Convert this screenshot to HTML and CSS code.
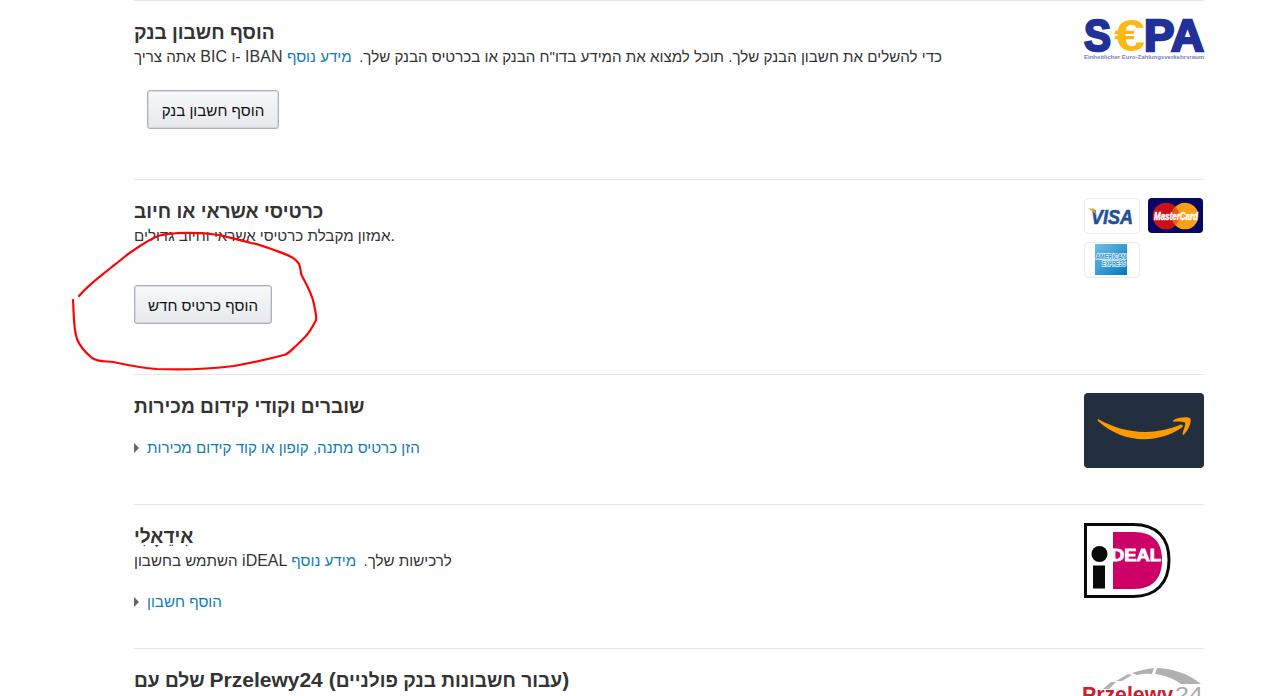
FILE: index.html
```html
<!DOCTYPE html>
<html lang="he">
<head>
    <meta charset="UTF-8">
    <meta name="viewport" content="width=device-width, initial-scale=1.0">
    <title>אמצעי תשלום</title>
    <link rel="stylesheet" href="styles.css">
</head>
<body>
    <div class="payments">
        <section class="method bank">
            <div class="info">
                <h2><bdi>הוסף חשבון בנק</bdi></h2>
                <p><bdi>אתה צריך</bdi> BIC <bdi>ו</bdi>- IBAN <a href="#"><bdi>מידע נוסף</bdi></a> <bdi class="after-link" dir="rtl">כדי להשלים את חשבון הבנק שלך. תוכל למצוא את המידע בדו"ח הבנק או בכרטיס הבנק שלך.</bdi></p>
                <button class="btn btn-bank"><bdi>הוסף חשבון בנק</bdi></button>
            </div>
            <svg class="logo" width="120" height="42" viewBox="0 0 120 42">
                <g font-family="Liberation Sans, sans-serif" font-weight="bold">
                    <g fill="#22309a" stroke="#22309a" stroke-width="2.4" font-size="44">
                        <text x="0" y="31.500" textLength="27" lengthAdjust="spacingAndGlyphs">S</text>
                        <text x="60" y="31.500" textLength="60" lengthAdjust="spacingAndGlyphs">PA</text>
                    </g>
                    <text x="30" y="32" font-size="45" textLength="31" lengthAdjust="spacingAndGlyphs" fill="#fdb913">€</text>
                    <text x="0" y="40" font-size="6" textLength="120" lengthAdjust="spacingAndGlyphs" fill="#7b80b8">Einheitlicher Euro-Zahlungsverkehrsraum</text>
                </g>
            </svg>
        </section>

        <section class="method card">
            <div class="info">
                <h2><bdi>כרטיסי אשראי או חיוב</bdi></h2>
                <p><bdi>אמזון מקבלת כרטיסי אשראי וחיוב גדולים</bdi>.</p>
                <button class="btn btn-card"><bdi>הוסף כרטיס חדש</bdi></button>
            </div>
            <svg class="logo" width="120" height="80" viewBox="0 0 120 80" font-family="Liberation Sans, sans-serif">
                <rect x=".5" y=".5" width="55" height="35" rx="4" fill="#fff" stroke="#ececec"/>
                <text x="7" y="26" font-size="21" font-weight="bold" font-style="italic" textLength="42" lengthAdjust="spacingAndGlyphs" fill="#1f5093" stroke="#1f5093" stroke-width=".6">VISA</text>
                <path d="M4 10.500h6l3 8c-2-4-5-6-9-8z" fill="#eea32f"/>
                <rect x="64" y="0" width="55" height="35" rx="4" fill="#060765"/>
                <circle cx="82" cy="18" r="13.3" fill="#cc1017"/>
                <circle cx="101" cy="18" r="13.3" fill="#fb9f16"/>
                <path d="M91.500 8.700a13.300 13.300 0 0 1 0 18.600a13.300 13.300 0 0 1 0-18.600z" fill="#e65c1b"/>
                <text x="70" y="22" font-size="10.500" font-weight="bold" font-style="italic" textLength="44" lengthAdjust="spacingAndGlyphs" fill="#fff" stroke="#fff" stroke-width=".5">MasterCard</text>
                <rect x=".5" y="44.500" width="55" height="35" rx="4" fill="#fff" stroke="#ececec"/>
                <linearGradient id="amex" x1="0" y1="0" x2="1" y2="1">
                    <stop offset="0" stop-color="#6fc0e8"/>
                    <stop offset="1" stop-color="#0577bd"/>
                </linearGradient>
                <rect x="11" y="46" width="32" height="31" fill="url(#amex)"/>
                <g font-weight="bold" font-size="6.500" fill="#3299cf" stroke="#e2f2fb" stroke-width="1.600" paint-order="stroke">
                    <text x="12" y="61" textLength="30" lengthAdjust="spacingAndGlyphs">AMERICAN</text>
                    <text x="18" y="68" textLength="24" lengthAdjust="spacingAndGlyphs">EXPRESS</text>
                </g>
            </svg>
            <!-- red pen mark around the button -->
            <svg class="pen" width="260" height="150" viewBox="65 225 260 150">
                <path d="M79 296C89 284 101 276 113 266C120 261 125 256 131 252C140 246 148 240 158 236C172 232 200 232 219 235C231 238 241 240 251 243C259 244 266 247 274 250C285 254 295 257 299 264C301 268 300 272 302 276C307 285 312 294 314 304C315 311 317 316 316 320C313 326 310 332 305 337L297 345C292 349 289 354 284 355C269 359 250 363 234 366C210 369 181 370 157 369C142 368 127 365 113 362C105 361 98 362 92 358C86 353 80 347 77 339C73 327 74 312 73 300"/>
            </svg>
        </section>

        <section class="method voucher">
            <div class="info">
                <h2><bdi>שוברים וקודי קידום מכירות</bdi></h2>
                <a class="expand" href="#"><bdi>הזן כרטיס מתנה, קופון או קוד קידום מכירות</bdi></a>
            </div>
            <svg class="logo" width="120" height="75" viewBox="0 0 120 75">
                <rect width="120" height="75" rx="4" fill="#232f3e"/>
                <path d="M14 26C40 41 70 43 97 31.500Q100 32 98 34.500C72 52 38 50 14 28Q13 26 14 26Z" fill="#ff9900"/>
                <path d="M89 27.500C94 24 104 23.500 106.500 25.500C108 30 103 39 99.500 42Q98 42 99 39C100 35 102 31 101 29.500C99 28.500 94 28.500 89 28.500Z" fill="#ff9900"/>
            </svg>
        </section>

        <section class="method ideal">
            <div class="info">
                <h2><bdi>אִידֵאָלִי</bdi></h2>
                <p><bdi>השתמש בחשבון</bdi> iDEAL <a href="#"><bdi>מידע נוסף</bdi></a> <bdi class="after-link" dir="rtl">לרכישות שלך.</bdi></p>
                <a class="expand" href="#"><bdi>הוסף חשבון</bdi></a>
            </div>
            <svg class="logo" width="120" height="75" viewBox="0 0 120 75">
                <path d="M1.500 1.500H49C73 1.500 85 15 85 37S73 73.500 49 73.500H1.500Z" fill="#fff" stroke="#0a0a0a" stroke-width="3"/>
                <path d="M29 9H50C70 9 78 20 78 37S70 66 50 66H29Z" fill="#cc0066"/>
                <circle cx="15.500" cy="31" r="8" fill="#0a0a0a"/>
                <path d="M9 42.500h12v23H9z" fill="#0a0a0a"/>
                <text x="27" y="37.500" font-family="Liberation Sans, sans-serif" font-size="16" font-weight="bold" textLength="50" lengthAdjust="spacingAndGlyphs" fill="#fff" stroke="#fff" stroke-width=".8">DEAL</text>
            </svg>
        </section>

        <section class="method przelewy">
            <div class="info">
                <h2><bdi>שלם עם</bdi> <span class="brand">Przelewy24</span> (<bdi>עבור חשבונות בנק פולניים</bdi>)</h2>
            </div>
            <svg class="logo" width="120" height="60" viewBox="0 0 120 60">
                <g fill="#b1b1b1">
                    <path d="M19 22L27 15L32 15L25 22Z"/>
                    <path d="M32 14L44 7L48 8L38 14Z"/>
                    <path d="M48 6Q60 2 70 1L68 7Q61 6 53 8Z"/>
                    <path d="M73 1C86 1 104 6 117 17L97 17C89 11 80 8 71 7Z"/>
                </g>
                <g font-family="Liberation Sans, sans-serif" font-size="22">
                    <text x="-2" y="35" font-weight="bold" textLength="91" lengthAdjust="spacingAndGlyphs" fill="#c8202f">Przelewy</text>
                    <text x="91" y="35" textLength="28" lengthAdjust="spacingAndGlyphs" fill="#aaa">24</text>
                </g>
            </svg>
        </section>
    </div>
</body>
</html>
```
FILE: styles.css
```css
html, body {
    margin: 0;
    padding: 0;
    height: 100%;
    overflow: hidden;
    background-color: #fff;
}

body {
    font-family: "Liberation Sans", Arial, sans-serif;
    font-size: 16px;
    color: #333;
}

.payments {
    width: 1070px;
    margin-left: 134px;
}

.method {
    position: relative;
    display: flex;
    justify-content: space-between;
    align-items: flex-start;
    box-sizing: border-box;
    border-top: 1px solid #e7e7e7;
    padding-top: 18px;
}

.bank {
    height: 179px;
}

.card {
    height: 195px;
}

.voucher {
    height: 130px;
}

.ideal {
    height: 144px;
}

.info {
    display: flex;
    flex-direction: column;
    align-items: flex-start;
    white-space: nowrap;
}

h2 {
    margin: 0;
    font-size: 21px;
    line-height: 26px;
}

p {
    margin: 0;
    line-height: 24px;
}

a {
    color: #0e7bb8;
    text-decoration: none;
}

/* hebrew runs are set a bit smaller than the latin ones */
bdi {
    font-size: 15.15px;
    line-height: 1;
}

h2 bdi {
    font-size: 19.15px;
}

.brand {
    margin-left: -1px;
}

.after-link {
    margin-left: 3px;
}

.logo {
    display: block;
    flex: none;
    overflow: visible;
}

.btn {
    box-sizing: border-box;
    height: 39px;
    padding: 3px 0 0;
    border: 1px solid #adb1b8;
    border-radius: 3px;
    background: linear-gradient(#f7f8fa, #e7e9ec);
    box-shadow: inset 0 0 0 1px rgba(173, 177, 200, 0.35);
    color: #111;
    font: inherit;
}

.btn-bank {
    width: 132px;
    margin: 21px 0 0 13px;
}

.btn-card {
    width: 138px;
    margin-top: 37px;
}

.expand {
    display: flex;
    align-items: center;
    gap: 8px;
    line-height: 24px;
    height: 24px;
    margin-top: 17px;
}

.expand::before {
    content: "";
    border: 5px solid transparent;
    border-left-color: #666;
    border-right: 0;
}

.pen {
    position: absolute;
    left: -69px;
    top: 45px;
}

.pen path {
    fill: none;
    stroke: #fb0505;
    stroke-width: 2.2;
    stroke-linecap: round;
}
```
